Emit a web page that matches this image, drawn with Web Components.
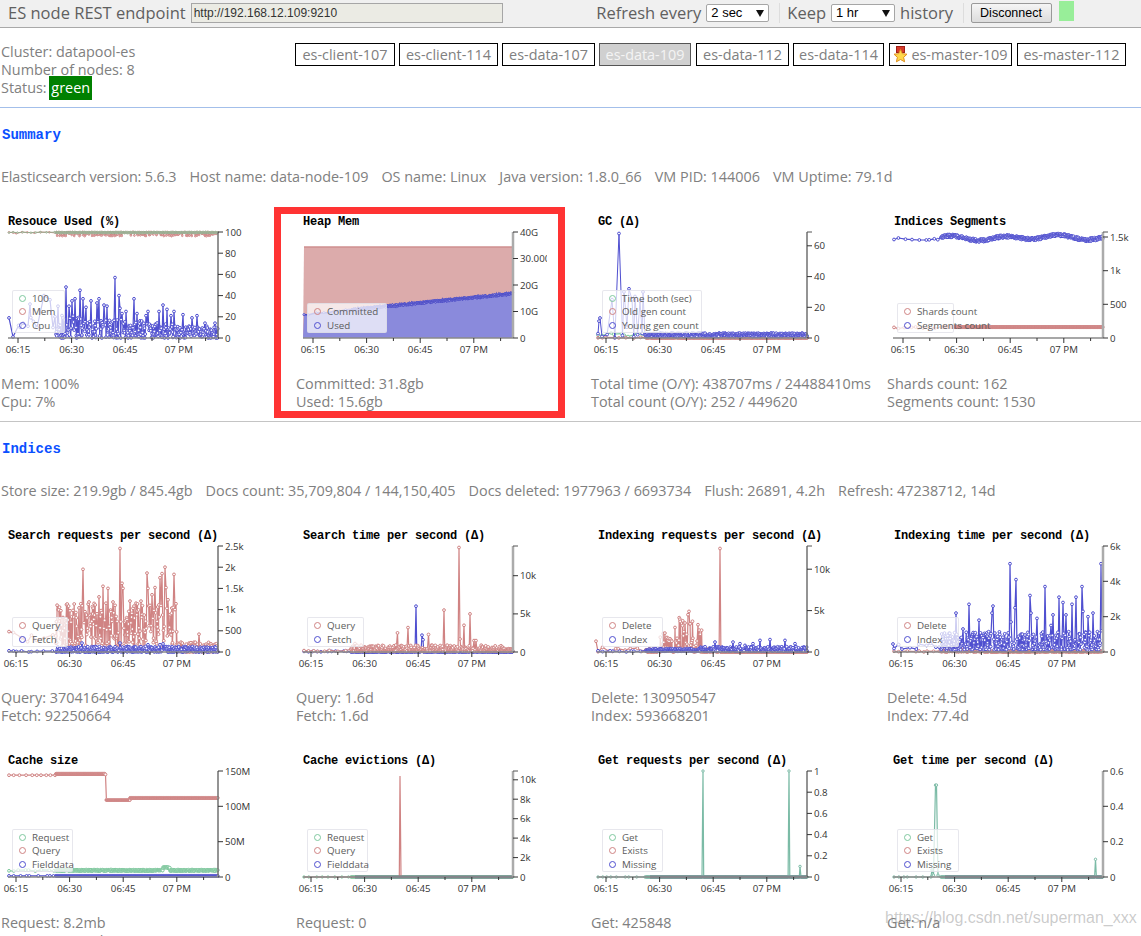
<!DOCTYPE html>
<html lang="en"><head><meta charset="utf-8"><title>Elasticsearch node monitor</title>
<style>
html,body{margin:0;padding:0;width:1141px;height:936px;overflow:hidden;background:#fff}
body{position:relative;font:14.4px/18px "Open Sans",sans-serif;color:#808080}
.v{display:block}
</style></head><body>
<es-header></es-header>
<es-cluster></es-cluster>
<es-section heading="Summary">
  <es-info><span style="letter-spacing:-.14px">Elasticsearch version: 5.6.3</span><span>Host name: data-node-109</span><span>OS name: Linux</span><span>Java version: 1.8.0_66</span><span>VM PID: 144006</span><span>VM Uptime: 79.1d</span></es-info>
  <es-grid>
    <es-chart key="res"><span class="v">Mem: 100%</span><span class="v">Cpu: 7%</span></es-chart>
    <es-chart key="heap"><span class="v">Committed: 31.8gb</span><span class="v">Used: 15.6gb</span></es-chart>
    <es-chart key="gc"><span class="v">Total time (O/Y): 438707ms / 24488410ms</span><span class="v">Total count (O/Y): 252 / 449620</span></es-chart>
    <es-chart key="seg"><span class="v">Shards count: 162</span><span class="v">Segments count: 1530</span></es-chart>
  </es-grid>
</es-section>
<es-section heading="Indices" style="--rule:#c4c4c4">
  <es-info><span>Store size: 219.9gb / 845.4gb</span><span>Docs count: 35,709,804 / 144,150,405</span><span>Docs deleted: 1977963 / 6693734</span><span>Flush: 26891, 4.2h</span><span>Refresh: 47238712, 14d</span></es-info>
  <es-grid>
    <es-chart key="sreq"><span class="v">Query: 370416494</span><span class="v">Fetch: 92250664</span></es-chart>
    <es-chart key="stime"><span class="v">Query: 1.6d</span><span class="v">Fetch: 1.6d</span></es-chart>
    <es-chart key="ireq"><span class="v">Delete: 130950547</span><span class="v">Index: 593668201</span></es-chart>
    <es-chart key="itime"><span class="v">Delete: 4.5d</span><span class="v">Index: 77.4d</span></es-chart>
  </es-grid>
  <es-grid style="margin-top:27px">
    <es-chart key="csize"><span class="v">Request: 8.2mb</span><span class="v">Query: 105.2mb</span></es-chart>
    <es-chart key="cevict"><span class="v">Request: 0</span><span class="v">Query: 231883</span></es-chart>
    <es-chart key="greq"><span class="v">Get: 425848</span><span class="v">Exists: 210480</span></es-chart>
    <es-chart key="gtime"><span class="v">Get: n/a</span><span class="v">Exists: 217</span></es-chart>
  </es-grid>
</es-section>
<es-overlay></es-overlay>
<script>
const mk=(tag,css,html)=>{customElements.define(tag,class extends HTMLElement{
  connectedCallback(){if(this.shadowRoot)return;const s=this.attachShadow({mode:'open'});
  s.innerHTML='<style>'+css+'</style>'+(typeof html==='function'?html(this):html);}});};

mk('es-header',`
:host{display:flex;align-items:center;height:25px;padding:0 67.5px 2px 8px;background:#f0f0f0;border-bottom:1px solid #a9a9a9;color:#606060;font:16.5px/20px "Open Sans",sans-serif;white-space:nowrap;overflow:hidden}
input{width:312px;height:20px;box-sizing:border-box;margin:0 0 0 5px;border:1px solid #a6a6a6;background:#ebebe4;font:12px "Liberation Sans",sans-serif;color:#333;padding:0 2px}
.right{margin-left:auto;display:flex;align-items:center;gap:5px}
.sel{position:relative;display:inline-block;height:18px}
select{appearance:none;-webkit-appearance:none;height:18px;box-sizing:border-box;border:1px solid #a6a6a6;border-radius:2px;background:#fff;font:13px "Liberation Sans",sans-serif;color:#000;padding:0 0 0 4px;display:block}
.sel svg{position:absolute;right:5px;top:6px}
.sep{width:1px;height:20px;background:#ddd}
button{width:81px;height:20px;box-sizing:border-box;border:1px solid #999;border-radius:2px;background:linear-gradient(#f5f5f5,#dcdcdc);font:12.5px "Liberation Sans",sans-serif;color:#000;padding:0;margin:0}
.led{width:15px;height:20px;background:#98ee99;margin:-3px 0 0 2px}
`,`<span>ES node REST endpoint</span><input value="http://192.168.12.109:9210" aria-label="endpoint">
<div class="right"><span>Refresh every</span>
<span class="sel"><select style="width:63px"><option>2 sec</option></select><svg width="8" height="7"><path d="M0 0H8L4 7Z" fill="#111"/></svg></span>
<span class="sep" style="margin:0 2px 0 5px"></span><span>Keep</span>
<span class="sel"><select style="width:64px"><option>1 hr</option></select><svg width="8" height="7"><path d="M0 0H8L4 7Z" fill="#111"/></svg></span>
<span>history</span><span class="sep" style="margin:0 1.5px 0 5px"></span><button>Disconnect</button><span class="led"></span></div>`);

mk('es-cluster',`
:host{display:flex;height:64px;padding-top:15px}
.info{width:295px;padding-left:1px;box-sizing:border-box;flex:none}
.g{background:green;color:#fff;padding:2px 2px 3px;margin-left:-1px}
.nodes{display:flex;gap:4px;height:23px}
a{display:flex;align-items:center;box-sizing:border-box;height:23px;border:1px solid #000;justify-content:center;color:#808080;white-space:nowrap;gap:3px}
a.on{background:#d0d0d0;color:#f4f4f4;border-color:#555}
`,`<div class="info">Cluster: datapool-es<br>Number of nodes: 8<br>Status: <span class="g">green</span></div>
<div class="nodes">
<a style="width:100px">es-client-107</a><a style="width:99px">es-client-114</a><a style="width:93px">es-data-107</a><a class="on" style="width:92px">es-data-109</a><a style="width:93px;margin-left:1px">es-data-112</a><a style="width:91px">es-data-114</a>
<a style="width:123px;margin-left:1px"><svg width="15" height="18" viewBox="0 0 15 18"><rect x="3.5" y="0.5" width="8" height="6" fill="#d63a2a" stroke="#a02018"/><path d="M7.5 3.5l1.9 4.2 4.6.5-3.4 3.1 1 4.5-4.1-2.3-4.1 2.3 1-4.5L1 8.2l4.6-.5Z" fill="#ffd84a" stroke="#e09020"/></svg>es-master-109</a><a style="width:109px;margin-left:1px">es-master-112</a>
</div>`);

mk('es-section',`
:host{display:block;border-top:1px solid var(--rule,#a3bfea)}
h2{margin:0;height:18px;padding:17px 0 0 2px;font:bold 14px/20px "Liberation Mono",monospace;color:#0a50ff}
`,el=>`<h2>${el.getAttribute('heading')}</h2><slot></slot>`);

mk('es-info',`
:host{display:flex;gap:13px;padding:25px 0 0 1px;height:18px;margin-bottom:27px;white-space:nowrap}
`,`<slot></slot>`);

mk('es-grid',`:host{display:grid;grid-template-columns:repeat(4,295px);margin-bottom:10px}`,`<slot></slot>`);

function rng(seed){let s=seed;return()=>{s=(s*1664525+1013904223)>>>0;return s/4294967296;};}
const COL={g:'#80c99f',r:'#d08383',b:'#4f4fd0'};
const ri=(r,a,b)=>a+(b-a)*r();
const heavy=(r,a,b,p=1.6)=>a+(b-a)*Math.pow(r(),p);
const CHARTS={
res:{title:'Resouce Used (%)',t0:18,ymax:100,ticks:[0,20,40,60,80,100],lw:53,ln:['100','Mem','Cpu'],lc:'grb',series:[
 {c:'r',rad:.8,lwd:1,f:(x,r)=>r()<.3?ri(r,96,99):ri(r,99,100)},
 {c:'g',rad:.8,lwd:1,lc:'#98ab8e',f:(x,r)=>ri(r,99,100)},
 {c:'b',f:(x,r)=>x<56?ri(r,2,20):heavy(r,0,26-x*.07),peaks:[[9,19],[13,1],[20,10],[30,32],[37,10],[44,40],[50,36],[55,20],[58,30],[66,48],[69,30],[72,35],[75,37],[80,45],[83,37],[86,29],[91,35],[97,33],[99,37],[104,31],[107,30],[115,57],[119,40],[120,28],[122,23],[126,25],[134,37],[137,23],[146,21],[148,25],[159,25],[163,31],[167,27],[171,21],[174,25],[183,22],[192,19],[197,21],[205,14],[215,14]]}]},
heap:{title:'Heap Mem',t0:18,ymax:40,ticks:[[0,'0'],[10,'10G'],[20,'20G'],[30,'30.000G'],[40,'40G']],lw:80,ln:['Committed','Used'],lc:'rb',light:1,series:[
 {c:'r',area:'#dcabab',lc:'#cf8f8f',lwd:1.5,rad:0,f:()=>34.3},
 {c:'b',area:'#8a8adc',lc:'#4848c8',lwd:1.5,rad:1,f:(x,r)=>8.8+8*(x-8)/210+ri(r,-.3,.3)}]},
gc:{title:'GC (Δ)',ox:7,t0:16,ymax:69,ticks:[[0,'0'],[20,'20'],[40,'40'],[60,'60']],lw:100,ln:['Time both (sec)','Old gen count','Young gen count'],lc:'grb',series:[
 {c:'g',f:(x,r)=>x<56?ri(r,.5,3.5):ri(r,.2,1.6)},
 {c:'r',f:(x,r)=>ri(r,0,.5)},
 {c:'b',lwd:1,f:(x,r)=>x<56?ri(r,0,3):ri(r,1,3.2),peaks:[[9,11],[10,13],[12,1],[22,25],[29,68],[34,30],[37,7],[39,32],[42,25],[45,27],[50,24],[53,30],[55,2]]}]},
seg:{title:'Indices Segments',ox:8,tx:9,vp:2,t0:18,ymax:1575,ticks:[[0,'0'],[500,'500'],[1000,'1k'],[1500,'1.5k']],lw:57,ln:['Shards count','Segments count'],lc:'rb',light:1,series:[
 {c:'r',f:(x,r)=>x<56?ri(r,140,165):162},
 {c:'b',f:(x,r)=>(x<56?1465:1490+28*Math.sin(x/8.5)+14*Math.sin(x/21))+ri(r,-22,22)}]},
sreq:{title:'Search requests per second (Δ)',t0:16,ymax:2500,ticks:[[0,'0'],[500,'500'],[1000,'1k'],[1500,'1.5k'],[2000,'2k'],[2500,'2.5k']],lw:56,ln:['Query','Fetch'],lc:'rb',series:[
 {c:'r',f:(x,r)=>x<56?ri(r,200,500):x<177?heavy(r,100,1150,1.3):heavy(r,0,230),peaks:[[9,480],[58,1000],[73,980],[79,1040],[83,1950],[85,950],[89,1180],[97,900],[99,1300],[103,1550],[106,1150],[108,1500],[113,1180],[120,2440],[122,1620],[123,1500],[130,1200],[136,1150],[141,1200],[147,1860],[148,1500],[150,1100],[152,1350],[155,1520],[160,1750],[162,1850],[165,2000],[166,1520],[168,1230],[174,1830],[175,1000],[181,230],[191,220],[199,420],[204,160],[211,190]]},
 {c:'b',f:(x,r)=>x<56?ri(r,0,30):heavy(r,0,130),peaks:[[82,210],[120,210],[148,170],[160,170],[163,190]]}]},
stime:{title:'Search time per second (Δ)',t0:16,ymax:13900,ticks:[[0,'0'],[5000,'5k'],[10000,'10k']],lw:57,ln:['Query','Fetch'],lc:'rb',light:1,series:[
 {c:'b',f:(x,r)=>ri(r,0,120),peaks:[[121,6000],[127,2200],[128,1600]]},
 {c:'r',f:(x,r)=>x<56?ri(r,50,250):heavy(r,100,900,2.4),peaks:[[60,1100],[102,3300],[102.5,2500],[113,3200],[133,4300],[133.5,2300],[149,5500],[164,13700],[165,1700],[169,3500],[175,5000],[179,1500],[181,1500]]}]},
ireq:{title:'Indexing requests per second (Δ)',ox:7,t0:16,ymax:12800,ticks:[[0,'0'],[5000,'5k'],[10000,'10k']],lw:61,ln:['Delete','Index'],lc:'rb',series:[
 {c:'r',f:(x,r)=>x<56?ri(r,0,600):(x>70&&x<82)?heavy(r,100,2700,2.4):(x>85&&x<103)?heavy(r,300,4500,2):(x>103&&x<112)?heavy(r,0,3200,2.4):x<130?heavy(r,0,400):0,peaks:[[6,1300],[95,3500],[99,4900],[98,4500],[108,3300],[130,12500]]},
 {c:'b',f:(x,r)=>x<56?ri(r,0,150):heavy(r,100,x>110?650:400,2),peaks:[[125,1200],[143,1200],[150,1000],[155,800],[163,1000],[170,1400],[180,1500],[195,1400],[205,1000],[215,500]]}]},
itime:{title:'Indexing time per second (Δ)',tx:9,vp:2,t0:16,ymax:6000,ticks:[[0,'0'],[2000,'2k'],[4000,'4k'],[6000,'6k']],lw:62,ln:['Delete','Index'],lc:'rb',light:1,series:[
 {c:'r',f:(x,r)=>ri(r,0,x>56&&x<100?180:60)},
 {c:'b',f:(x,r)=>x<56?ri(r,150,500):heavy(r,120,1150,1.8),peaks:[[8,450],[71,2200],[78,1300],[84,2700],[94,1800],[108,2600],[107,2200],[125,5000],[126,1700],[130,2500],[131,4100],[145,3200],[146,2200],[152,1900],[160,3700],[166,1500],[168,2100],[174,3100],[178,2800],[181,2100],[187,2700],[191,3100],[197,3700],[198,2300],[203,2000],[208,2200],[216,5000],[217,1200]]}]},
csize:{title:'Cache size',t0:16,ymax:150,ticks:[[0,'0'],[50,'50M'],[100,'100M'],[150,'150M']],lw:61,ln:['Request','Query','Fielddata'],lc:'grb',series:[
 {c:'g',f:(x,r)=>(x>163&&x<170?13:9)+ri(r,-.6,1.4)},
 {c:'r',f:(x,r)=>x<56?144:x<105?146:x<130?109:112,peaks:[[105.5,145]]},
 {c:'b',f:(x,r)=>1.5}]},
cevict:{title:'Cache evictions (Δ)',t0:16,ymax:10900,ticks:[[0,'0'],[2000,'2k'],[4000,'4k'],[6000,'6k'],[8000,'8k'],[10000,'10k']],lw:61,ln:['Request','Query','Fielddata'],lc:'grb',light:1,series:[
 {c:'g',f:()=>0,rad:1.2},{c:'r',f:()=>0,rad:0,lwd:1.2,peaks:[[105,10400]]},{band:1,from:60}]},
greq:{title:'Get requests per second (Δ)',ox:7,t0:16,ymax:1,ticks:[[0,'0'],[.2,'0.2'],[.4,'0.4'],[.6,'0.6'],[.8,'0.8'],[1,'1']],lw:61,ln:['Get','Exists','Missing'],lc:'grb',series:[
 {c:'g',lc:'#7bbba6',f:()=>0,rad:1.2,peaks:[[113,1],[199,1],[210,.1]]},{band:1,from:60}]},
gtime:{title:'Get time per second (Δ)',tx:8,vp:2,t0:16,ymax:.6,ticks:[[0,'0'],[.2,'0.2'],[.4,'0.4'],[.6,'0.6']],lw:62,ln:['Get','Exists','Missing'],lc:'grb',light:1,series:[
 {c:'g',lc:'#7bbba6',f:()=>0,rad:1.2,peaks:[[47,.04],[48.5,.01],[50.5,.52],[51.5,.52],[53,.01],[210.5,.1]]},{band:1,from:60}]},
};
let seed=7;
function chartSvg(d){
 const ox=d.ox??8,W=210,T=3,H=106,R=ox+W,B=T+H,t0=d.t0;
 const Y=v=>+(B-Math.min(v,d.ymax)/d.ymax*H).toFixed(1);
 let s='';
 for(const ser of d.series){
  if(ser.band){s+=`<rect x="${ser.from??ox}" y="${B-1.5}" width="${R-(ser.from??ox)}" height="3" fill="#72788a"/>`;continue;}
  const r=rng(seed+=13);const pts=[];
  let x=ox+1;while(x<56){pts.push(x);x+=ri(r,2.5,9);}
  x=56;while(x<=R){pts.push(x);x+=.35;}
  const map=new Map();pts.forEach(px=>map.set(px,ser.f(px,r)));
  (ser.peaks||[]).forEach(([px,v])=>{
    for(const k of map.keys())if(Math.abs(k-px)<.7&&k!==px)map.delete(k);
    map.set(px,v);});
  const arr=[...map.entries()].sort((a,b)=>a[0]-b[0]);
  const line=arr.map(([a,v])=>`${a.toFixed(1)},${Y(v)}`).join(' ');
  const col=ser.lc||COL[ser.c];
  if(ser.area)s+=`<polygon points="${ox},${B} ${line} ${R},${B}" fill="${ser.area}"/>`;
  s+=`<polyline points="${line}" fill="none" stroke="${col}" stroke-width="${ser.lwd||1.2}"/>`;
  const rad=ser.rad??1.4;
  if(rad>0)s+=`<g fill="#fff" stroke="${col}" stroke-width="1">`+arr.map(([a,v])=>`<circle cx="${a.toFixed(1)}" cy="${Y(v)}" r="${rad}"/>`).join('')+'</g>';
 }
 const ax=d.light?'#ababab':'#707070',aw=d.light?2.5:1.5;
 s+=`<path d="M${R} ${T}V${B}" stroke="${ax}" stroke-width="${aw}" fill="none"/><path d="M${ox} ${B}H${R}" stroke="#8a8a8a" stroke-width="1.5" fill="none"/>`;
 const ticks=d.ticks.map(t=>Array.isArray(t)?t:[t,String(t)]);
 for(const [v,l] of ticks){const y=v===0?B:Y(v);s+=`<path d="M${R} ${y}h5" stroke="#333"/><text x="${R+7}" y="${y+3.5}">${l}</text>`;}
 if(ticks[ticks.length-1][0]<d.ymax)s+=`<path d="M${R} ${T}h5" stroke="#555"/>`;
 const labs=['06:15','06:30','06:45','07 PM'];
 for(let i=0;i<8;i++){const x=t0+i*26.8;if(x>R)break;
  s+=`<path d="M${x.toFixed(1)} ${B}v${i%2?3:5}" stroke="#333"/>`;
  if(i%2==0)s+=`<text x="${x.toFixed(1)}" y="${B+15}" text-anchor="middle">${labs[i/2]}</text>`;}
 return `<svg width="252" height="130" viewBox="0 0 252 130" font-family="Open Sans, sans-serif" font-size="9.7" fill="#333">${s}</svg>`;
}
mk('es-chart',`
:host{display:block;width:295px}
.t{height:16px;font:bold 12px/18px "Liberation Mono",monospace;letter-spacing:-.2px;color:#000;white-space:nowrap}
.w{position:relative;height:130px}
svg{display:block}
.lg{position:absolute;left:12px;bottom:26px;box-sizing:border-box;padding:1px 0 0 6px;background:rgba(255,255,255,.72);border:1px solid rgba(215,215,225,.6);border-radius:2px;font:9.8px/13.5px "Open Sans",sans-serif;color:#5c5c5c;white-space:nowrap}
.lg div{display:flex;align-items:center;gap:6px;height:13.5px}
.lg i{display:block;flex:none;width:5px;height:5px;border:1.5px solid;border-radius:50%}
.vals{margin-top:16px;white-space:nowrap}
`,el=>{const d=CHARTS[el.getAttribute('key')];
 return `<div class="t" style="padding-left:${d.tx??8}px">${d.title}</div><div class="w">${chartSvg(d)}<div class="lg" style="width:${d.lw}px">${d.ln.map((n,i)=>`<div><i style="border-color:${COL[d.lc[i]]}"></i>${n}</div>`).join('')}</div></div><div class="vals" style="padding-left:${d.vp??1}px"><slot></slot></div>`;});

mk('es-overlay',`
:host{display:block}
.mark{position:absolute;left:274px;top:207px;width:291px;height:211px;box-sizing:border-box;border:7px solid #ff3333}
.wm{position:absolute;left:885px;top:908px;font:16px/20px "Liberation Sans",sans-serif;color:rgba(140,140,140,.45);white-space:nowrap}
`,`<div class="mark"></div><div class="wm">https://blog.csdn.net/superman_xxx</div>`);
</script>
</body></html>
